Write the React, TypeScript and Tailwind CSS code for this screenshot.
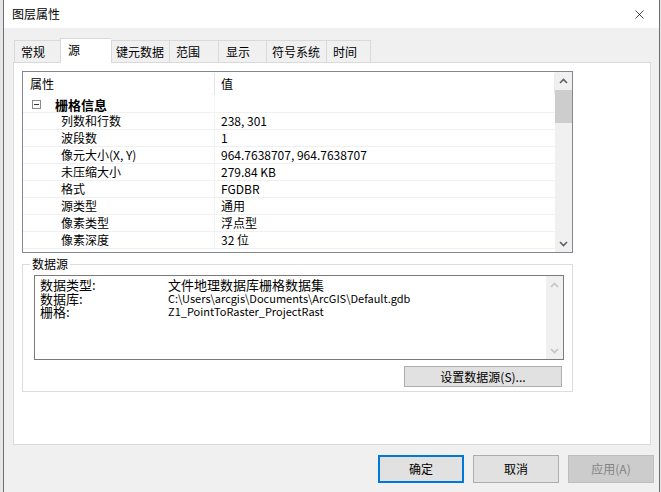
import { X } from 'lucide-react'

const tabs = [
  { label: '常规', w: 'w-[46px]', pl: 'pl-[6px]' },
  { label: '源', w: 'w-[51px]', pl: 'pl-[7px]', active: true },
  { label: '键元数据', w: 'w-[58px]', pl: 'pl-[4px]' },
  { label: '范围', w: 'w-[49px]', pl: 'pl-[6px]' },
  { label: '显示', w: 'w-[48px]', pl: 'pl-[7px]' },
  { label: '符号系统', w: 'w-[60px]', pl: 'pl-[5px]' },
  { label: '时间', w: 'w-[45px]', pl: 'pl-[6px]' },
]

const rows = [
  ['列数和行数', '238, 301'],
  ['波段数', '1'],
  ['像元大小(X, Y)', '964.7638707, 964.7638707'],
  ['未压缩大小', '279.84 KB'],
  ['格式', 'FGDBR'],
  ['源类型', '通用'],
  ['像素类型', '浮点型'],
  ['像素深度', '32 位'],
]

function Chevron({ up, color }: { up?: boolean; color: string }) {
  return (
    <svg width="9" height="6" viewBox="0 0 9 6" className={up ? '' : 'rotate-180'}>
      <path d="M1 5 L4.5 1.5 L8 5" fill="none" stroke={color} strokeWidth="1.6" />
    </svg>
  )
}

export default function App() {
  return (
    <div className="w-[661px] h-[492px] flex bg-[#e6e6e6] text-black text-[12px] font-['Noto_Sans_CJK_SC',sans-serif] overflow-hidden">
      <div className="w-[3px]" />
      <div className="w-[657px] flex flex-col border-x border-[#6e6e6e]">
        {/* title bar */}
        <div className="h-[28px] bg-white flex items-center justify-between">
          <span className="pl-[8px] leading-none">图层属性</span>
          <div className="w-[40px] h-[28px] flex items-center justify-center">
            <X size={15} strokeWidth={1.2} color="#111" />
          </div>
        </div>

        <div className="flex-1 bg-[#f0f0f0] flex flex-col">
          {/* tabs */}
          <div className="h-[34px] pt-[10px] pl-[10px] flex items-end">
            {tabs.map((t, i) => (
              <div
                key={t.label}
                className={`${t.w} ${t.pl} flex items-center border-t border-l border-[#d9d9d9] leading-none ${
                  i === tabs.length - 1 ? 'border-r' : ''
                } ${t.active ? 'h-[25px] bg-white relative z-10 -mb-px pb-[2px]' : 'h-[22px] bg-[#f0f0f0]'}`}
              >
                {t.label}
              </div>
            ))}
          </div>

          {/* panel */}
          <div className="ml-[9px] mr-[8px] h-[383px] bg-white border border-[#d9d9d9] pt-[8px] pl-[8px]">
            {/* property grid */}
            <div className="w-[551px] h-[182px] border border-[#828790] flex overflow-hidden">
              <div className="w-[532px] flex flex-col">
                <div className="h-[24px] flex shrink-0">
                  <div className="w-[192px] flex items-center pl-[7px] my-[1px] border-r border-[#e3e3e3]">属性</div>
                  <div className="flex-1 flex items-center pl-[6px] my-[1px] border-r border-[#ececec]">值</div>
                </div>
                <div className="h-[17px] flex shrink-0 border-b border-[#f0f0f0]">
                  <div className="w-[192px] flex items-center border-r border-[#f7f7f7]">
                    <div className="ml-[9px] w-[9px] h-[9px] border border-[#8a8a8a] flex items-center justify-center">
                      <div className="w-[5px] h-px bg-[#333]" />
                    </div>
                    <span className="ml-[14px] text-[13px] font-bold leading-none">栅格信息</span>
                  </div>
                  <div className="flex-1" />
                </div>
                {rows.map(([k, v]) => (
                  <div key={k} className="h-[17px] flex shrink-0 border-b border-[#f0f0f0]">
                    <div className="w-[192px] flex items-center pl-[38px] border-r border-[#f0f0f0] leading-none">{k}</div>
                    <div className="flex-1 flex items-center pl-[6px] leading-none">{v}</div>
                  </div>
                ))}
              </div>
              <div className="w-[17px] bg-[#f0f0f0] flex flex-col ml-auto">
                <div className="h-[18px] flex items-center justify-center">
                  <Chevron up color="#606060" />
                </div>
                <div className="h-[33px] bg-[#cdcdcd]" />
                <div className="flex-1" />
                <div className="h-[17px] flex items-center justify-center">
                  <Chevron color="#606060" />
                </div>
              </div>
            </div>

            {/* data source group */}
            <fieldset className="mt-[3px] w-[551px] border border-[#dcdcdc] pb-[4px]">
              <legend className="ml-[7px] px-[2px] h-[16px] leading-[16px]">数据源</legend>
              <div className="ml-[11px] mt-[3px] w-[530px] h-[85px] border border-[#7a7a7a] flex">
                <div className="flex-1 pl-[5px] pt-[2px] leading-[13.5px]">
                  <div className="flex">
                    <span className="w-[128px] text-[13px]">数据类型:</span>
                    <span className="text-[13px]">文件地理数据库栅格数据集</span>
                  </div>
                  <div className="flex">
                    <span className="w-[128px] text-[13px]">数据库:</span>
                    <span className="text-[11px]">C:\Users\arcgis\Documents\ArcGIS\Default.gdb</span>
                  </div>
                  <div className="flex">
                    <span className="w-[128px] text-[13px]">栅格:</span>
                    <span className="text-[11px]">Z1_PointToRaster_ProjectRast</span>
                  </div>
                </div>
                <div className="w-[17px] bg-[#f0f0f0] flex flex-col justify-between">
                  <div className="h-[17px] flex items-center justify-center">
                    <Chevron up color="#c4c4c4" />
                  </div>
                  <div className="h-[17px] flex items-center justify-center">
                    <Chevron color="#c4c4c4" />
                  </div>
                </div>
              </div>
              <div className="flex justify-end pr-[10px] mt-[6px]">
                <div className="w-[158px] h-[21px] bg-[#e1e1e1] border border-[#adadad] flex items-center justify-center leading-none">
                  设置数据源(S)...
                </div>
              </div>
            </fieldset>
          </div>

          {/* dialog buttons */}
          <div className="flex justify-end gap-[9px] pr-[5px] pt-[10px]">
            <div className="w-[86px] h-[28px] bg-[#e1e1e1] border-2 border-[#0078d7] flex items-center justify-center leading-none">
              确定
            </div>
            <div className="w-[86px] h-[28px] bg-[#e1e1e1] border border-[#adadad] flex items-center justify-center leading-none">
              取消
            </div>
            <div className="w-[86px] h-[28px] bg-[#cccccc] border border-[#bfbfbf] text-[#838383] flex items-center justify-center leading-none">
              应用(A)
            </div>
          </div>
        </div>
      </div>
      <div className="w-[1px]" />
    </div>
  )
}
